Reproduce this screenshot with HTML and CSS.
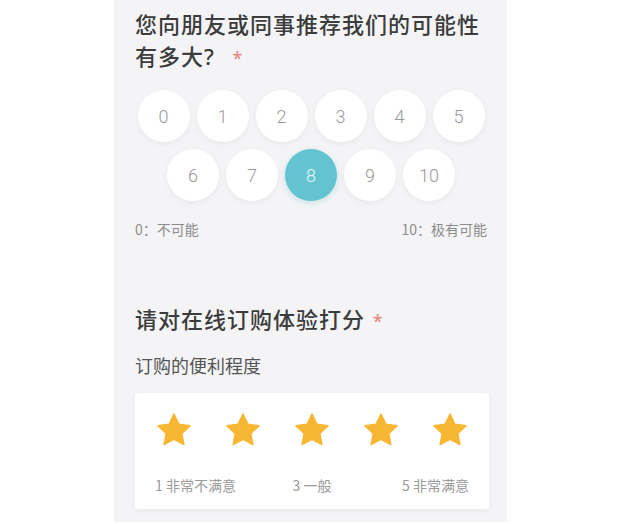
FILE: index.html
```html
<!DOCTYPE html>
<html lang="zh-CN">
<head>
<meta charset="utf-8">
<link rel="stylesheet" href="styles.css">
</head>
<body>
<main class="panel">
  <section class="q-nps">
    <h2 class="q-title">您向朋友或同事推荐我们的可能性有多大? <span class="req req-wide">*</span></h2>
    <div class="scale">
      <span class="dot">0</span>
      <span class="dot">1</span>
      <span class="dot">2</span>
      <span class="dot">3</span>
      <span class="dot">4</span>
      <span class="dot">5</span>
      <span class="dot">6</span>
      <span class="dot">7</span>
      <span class="dot dot-on">8</span>
      <span class="dot">9</span>
      <span class="dot">10</span>
    </div>
    <div class="scale-labels">
      <span>0：不可能</span>
      <span>10：极有可能</span>
    </div>
  </section>

  <section class="q-rate">
    <h2 class="q-title">请对在线订购体验打分 <span class="req">*</span></h2>
    <p class="sub">订购的便利程度</p>
    <div class="card">
      <div class="stars">
        <svg class="star" viewBox="0 0 24 24"><path d="M12 1.8l3.1 6.5 7.1 1-5.2 4.9 1.3 7.1L12 17.9l-6.3 3.4 1.3-7.1-5.2-4.9 7.1-1z" stroke-linejoin="round"/></svg>
        <svg class="star" viewBox="0 0 24 24"><path d="M12 1.8l3.1 6.5 7.1 1-5.2 4.9 1.3 7.1L12 17.9l-6.3 3.4 1.3-7.1-5.2-4.9 7.1-1z" stroke-linejoin="round"/></svg>
        <svg class="star" viewBox="0 0 24 24"><path d="M12 1.8l3.1 6.5 7.1 1-5.2 4.9 1.3 7.1L12 17.9l-6.3 3.4 1.3-7.1-5.2-4.9 7.1-1z" stroke-linejoin="round"/></svg>
        <svg class="star" viewBox="0 0 24 24"><path d="M12 1.8l3.1 6.5 7.1 1-5.2 4.9 1.3 7.1L12 17.9l-6.3 3.4 1.3-7.1-5.2-4.9 7.1-1z" stroke-linejoin="round"/></svg>
        <svg class="star" viewBox="0 0 24 24"><path d="M12 1.8l3.1 6.5 7.1 1-5.2 4.9 1.3 7.1L12 17.9l-6.3 3.4 1.3-7.1-5.2-4.9 7.1-1z" stroke-linejoin="round"/></svg>
      </div>
      <div class="star-labels">
        <span class="sl-left">1 非常不满意</span>
        <span class="sl-mid">3 一般</span>
        <span class="sl-right">5 非常满意</span>
      </div>
    </div>
  </section>
</main>
</body>
</html>
```

FILE: styles.css
```css
* { box-sizing: border-box; }
html, body { margin: 0; padding: 0; background: #ffffff; }
body {
  font-family: "Noto Sans CJK SC", "Noto Sans", sans-serif;
  color: #383838;
}
.panel {
  width: 393px;
  height: 522px;
  margin-left: 114px;
  background: #f4f4f6;
  padding: 8px 20px 0 21px;
}
.q-title {
  margin: 0;
  font-family: "Noto Sans", "Noto Sans CJK SC", sans-serif;
  font-size: 22px;
  letter-spacing: 1px;
  line-height: 32px;
  font-weight: 500;
  color: #3c3c3c;
}
.req {
  color: #e8807a;
  font-size: 18px;
  font-weight: 400;
  line-height: 0;
  margin-left: 1px;
}
.req-wide { margin-left: 11px; }
.scale {
  width: 347px;
  margin: 18px auto 0;
  display: flex;
  flex-wrap: wrap;
  justify-content: center;
  gap: 7px;
}
.dot {
  width: 52px;
  height: 52px;
  border-radius: 50%;
  background: #ffffff;
  box-shadow: 0 2px 6px rgba(0, 0, 0, 0.05);
  display: flex;
  align-items: center;
  justify-content: center;
  font-family: Roboto, "Noto Sans", sans-serif;
  font-weight: 300;
  font-size: 18px;
  color: #9a9a9a;
}
.dot-on {
  background: #63c3d0;
  color: #e6f6f8;
  box-shadow: 0 2px 6px rgba(70, 170, 185, 0.25);
}
.scale-labels {
  margin-top: 18px;
  display: flex;
  justify-content: space-between;
  font-size: 14px;
  line-height: 20px;
  color: #8c8c8c;
}
.q-rate { margin-top: 64px; }
.sub {
  margin: 18px 0 0;
  font-size: 18px;
  line-height: 24px;
  color: #555555;
}
.card {
  margin-top: 16px;
  width: 354px;
  height: 116px;
  background: #ffffff;
  border-radius: 3px;
  box-shadow: 0 2px 6px rgba(0, 0, 0, 0.05);
  padding: 18px 20px 0 20px;
}
.stars {
  display: flex;
  justify-content: space-between;
}
.star {
  width: 38px;
  height: 38px;
  fill: #f7b733;
  stroke: #f7b733;
  stroke-width: 0.8;
}
.star-labels {
  margin-top: 26px;
  display: grid;
  grid-template-columns: 1fr auto 1fr;
  font-size: 14px;
  line-height: 20px;
  color: #9a9a9a;
}
.sl-left { justify-self: start; }
.sl-mid { justify-self: center; }
.sl-right { justify-self: end; }
```
